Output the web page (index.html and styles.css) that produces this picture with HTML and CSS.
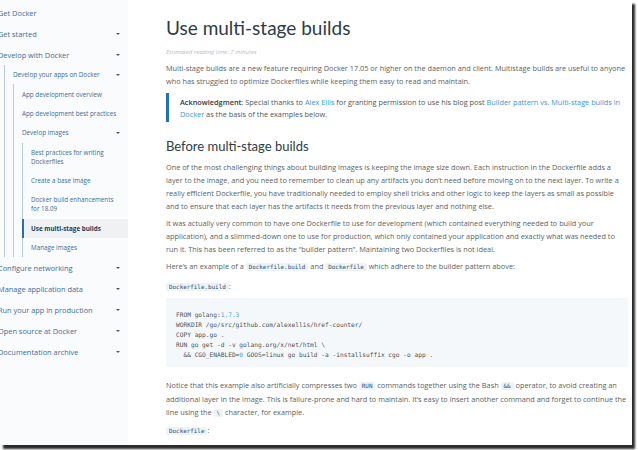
FILE: index.html
```html
<!DOCTYPE html>
<html>
<head>
<meta charset="utf-8">
<link rel="stylesheet" href="styles.css">
</head>
<body>
<div class="frame">
  <nav class="sidebar">
    <ul class="l1">
      <li><a class="item">Get Docker</a></li>
      <li><a class="item">Get started<span class="caret"></span></a></li>
      <li><a class="item">Develop with Docker<span class="caret"></span></a>
        <ul class="sub l2">
          <li><a class="item">Develop your apps on Docker<span class="caret"></span></a>
            <ul class="sub l3">
              <li><a class="item">App development overview</a></li>
              <li><a class="item">App development best practices</a></li>
              <li><a class="item">Develop images<span class="caret"></span></a>
                <ul class="sub l4">
                  <li><a class="item">Best practices for writing<br>Dockerfiles</a></li>
                  <li><a class="item">Create a base image</a></li>
                  <li><a class="item">Docker build enhancements<br>for 18.09</a></li>
                  <li class="active"><a class="item">Use multi-stage builds</a></li>
                  <li><a class="item">Manage images</a></li>
                </ul>
              </li>
            </ul>
          </li>
        </ul>
      </li>
      <li><a class="item">Configure networking<span class="caret"></span></a></li>
      <li><a class="item">Manage application data<span class="caret"></span></a></li>
      <li><a class="item">Run your app in production<span class="caret"></span></a></li>
      <li><a class="item">Open source at Docker<span class="caret"></span></a></li>
      <li><a class="item">Documentation archive<span class="caret"></span></a></li>
    </ul>
  </nav>
  <main class="main">
    <h1 class="title">Use multi-stage builds</h1>
    <p class="reading">Estimated reading time: 7 minutes</p>
    <p>Multi-stage builds are a new feature requiring Docker 17.05 or higher on the daemon and client. Multistage builds are useful to anyone who has struggled to optimize Dockerfiles while keeping them easy to read and maintain.</p>
    <blockquote class="note">
      <strong>Acknowledgment</strong>: Special thanks to <a class="link">Alex Ellis</a> for granting permission to use his blog post <a class="link">Builder pattern vs. Multi-stage builds in Docker</a> as the basis of the examples below.
    </blockquote>
    <h2 class="subtitle">Before multi-stage builds</h2>
    <p>One of the most challenging things about building images is keeping the image size down. Each instruction in the Dockerfile adds a layer to the image, and you need to remember to clean up any artifacts you don’t need before moving on to the next layer. To write a really efficient Dockerfile, you have traditionally needed to employ shell tricks and other logic to keep the layers as small as possible and to ensure that each layer has the artifacts it needs from the previous layer and nothing else.</p>
    <p>It was actually very common to have one Dockerfile to use for development (which contained everything needed to build your application), and a slimmed-down one to use for production, which only contained your application and exactly what was needed to run it. This has been referred to as the “builder pattern”. Maintaining two Dockerfiles is not ideal.</p>
    <p>Here’s an example of a <code class="ic">Dockerfile.build</code> and <code class="ic">Dockerfile</code> which adhere to the builder pattern above:</p>
    <p class="file first"><code class="ic">Dockerfile.build</code>:</p>
    <pre class="code">FROM golang:<span class="num">1.7.3</span>
WORKDIR /go/src/github.com/alexellis/href-counter/
COPY app.go .
RUN go get -d -v golang.org/x/net/html \
  &amp;&amp; CGO_ENABLED=<span class="num">0</span> GOOS=linux go build -a -installsuffix cgo -o app .</pre>
    <p>Notice that this example also artificially compresses two <code class="ic">RUN</code> commands together using the Bash <code class="ic">&amp;&amp;</code> operator, to avoid creating an additional layer in the image. This is failure-prone and hard to maintain. It’s easy to insert another command and forget to continue the line using the <code class="ic">\</code> character, for example.</p>
    <p class="file last"><code class="ic">Dockerfile</code>:</p>
  </main>
</div>
</body>
</html>
```

FILE: styles.css
```css
* { box-sizing: border-box; }
html, body { margin: 0; padding: 0; background: #ffffff; }
body { width: 638px; height: 450px; overflow: hidden; }

.frame {
  width: 632px;
  height: 445px;
  display: flex;
  overflow: hidden;
  background: #ffffff;
  box-shadow: 3px 4px 2px rgba(20, 20, 20, 0.9);
}

/* Sidebar */
.sidebar {
  width: 128px;
  flex: none;
  background: #fafbfc;
  padding-top: 2px;
  font-family: "Open Sans", sans-serif;
}
.sidebar ul { list-style: none; margin: 0; padding: 0; }
.l1 { margin-left: -2px !important; }
.item {
  display: flex;
  align-items: center;
  justify-content: space-between;
  color: #3c6e98;
  text-decoration: none;
  padding-right: 8px;
}
.l1 > li > .item { height: 21px; font-size: 7.4px; }
.sub {
  border-left: 1px solid #b9c9d8;
}
.l2 { margin-left: 6px !important; }
.l3 { margin-left: 8px !important; }
.l4 { margin-left: 8px !important; }
.sub > li > .item {
  font-size: 6.3px;
  line-height: 9px;
  padding-top: 5.2px;
  padding-bottom: 5.2px;
  padding-left: 8px;
  margin-left: -1px;
  border-left: 1px solid transparent;
}
.l4 > li > .item { padding-right: 4px; }
.l4 > li.active > .item {
  background: #f0f1f2;
  border-left: 2px solid #2d6ea3;
  color: #1d3d5c;
  font-weight: 700;
  margin-left: -1px;
  padding-left: 7px;
}
.caret {
  width: 0;
  height: 0;
  border-left: 2px solid transparent;
  border-right: 2px solid transparent;
  border-top: 2px solid #4a5866;
  flex: none;
}

/* Main */
.main {
  width: 462px;
  margin-left: 38px;
  font-family: "Open Sans", sans-serif;
  font-size: 7.34px;
  line-height: 13px;
  color: #5a5f63;
}
.title {
  font-family: "Lato", sans-serif;
  font-weight: 400;
  font-size: 19px;
  line-height: 24px;
  color: #2c3b45;
  margin: 16px 0 0;
}
.reading {
  font-style: italic;
  font-size: 6px;
  color: #b8bcbf;
}
.main p { margin: 0 0 4px; }
.main p.reading { margin: 6px 0 3px; }
.note {
  margin: 5px 0 0;
  border-left: 3px solid #1f72b8;
  padding: 2.5px 0 2.5px 11px;
  line-height: 12px;
  color: #505559;
}
.note strong { color: #33383c; font-weight: 600; }
.link { color: #3c95d9; text-decoration: none; }
.subtitle {
  font-family: "Lato", sans-serif;
  font-weight: 400;
  font-size: 13px;
  line-height: 20px;
  color: #2c3b45;
  margin: 14px 0 5px;
}
.ic {
  font-family: "DejaVu Sans Mono", monospace;
  font-size: 5.9px;
  background: #eef3f7;
  color: #34506a;
  padding: 1px 3px;
  border-radius: 2px;
}
.main p.first { margin: 6px 0 4px; }
.main p.last { margin: 2px 0 0; }
.code {
  background: #f5f8fb;
  margin: 0 0 12px;
  padding: 12px 10px 7px;
  font-family: "DejaVu Sans Mono", monospace;
  font-size: 6.2px;
  line-height: 10px;
  color: #4b5157;
}
.num { color: #4aa0c9; }
```
